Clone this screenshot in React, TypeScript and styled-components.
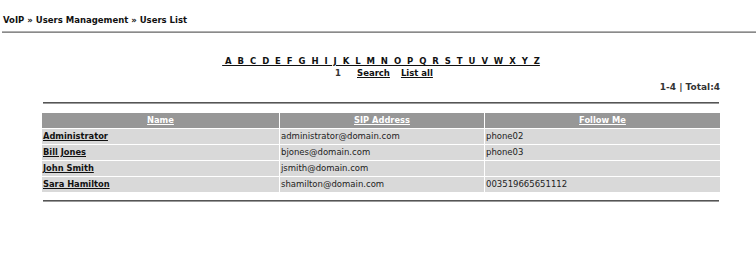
import React from "react";
import styled, { createGlobalStyle } from "styled-components";

const Global = createGlobalStyle`
  html, body { margin: 0; padding: 0; background: #fff; }
  body { font-family: "DejaVu Sans", Verdana, sans-serif; color: #222; }
`;

const Page = styled.div`
  width: 756px;
  height: 258px;
  overflow: hidden;
`;

const Breadcrumb = styled.div`
  padding: 15px 0 0 3px;
  height: 16px;
  font-size: 8.5px;
  font-weight: bold;
  line-height: 11px;
  color: #111;
`;

const TopRule = styled.div`
  margin-left: 2px;
  border-bottom: 1px solid #8a8a8a;
  border-top: 1px solid #b0b0b0;
`;

const Content = styled.div`
  margin-left: 41px;
  width: 680px;
`;

const Letters = styled.div`
  margin-top: 23px;
  text-align: center;
  font-size: 8.5px;
  font-weight: bold;
  line-height: 11px;
`;

const LetterLink = styled.a`
  color: #111;
  text-decoration: underline;
  white-space: pre;
`;

const Actions = styled.div`
  display: flex;
  justify-content: center;
  margin-top: 1px;
  padding-left: 6px;
  font-size: 8.5px;
  font-weight: bold;
  line-height: 11px;
`;

const Plain = styled.span`
  color: #333;
  margin-right: 16px;
`;

const ActionLink = styled.a<{ $gap?: number }>`
  color: #111;
  text-decoration: underline;
  margin-right: ${(p) => p.$gap ?? 0}px;
`;

const Counter = styled.div`
  margin-top: 3px;
  padding-right: 1px;
  text-align: right;
  font-size: 9px;
  font-weight: bold;
  line-height: 11px;
  color: #333;
`;

const Hr = styled.div<{ $top: number }>`
  margin: ${(p) => p.$top}px 2px 0;
  border-top: 1px solid #555;
  border-bottom: 1px solid #9a9a9a;
`;

const Table = styled.table`
  margin-top: 8px;
  width: 680px;
  border-collapse: separate;
  border-spacing: 1px;
  font-size: 8.5px;
  table-layout: fixed;
`;

const HeadCell = styled.th`
  background: #979797;
  height: 15px;
  padding: 0;
  font-weight: bold;
  font-size: 8.3px;
  text-align: center;
  line-height: 15px;
`;

const HeadLink = styled.a`
  color: #fff;
  text-decoration: underline;
`;

const Cell = styled.td`
  background: #d9d9d9;
  height: 15px;
  padding: 0 0 0 1px;
  line-height: 15px;
  color: #222;
  white-space: nowrap;
`;

const NameLink = styled.a`
  color: #111;
  font-weight: bold;
  font-size: 8.3px;
  text-decoration: underline;
`;

const users = [
  { name: "Administrator", sip: "administrator@domain.com", follow: "phone02" },
  { name: "Bill Jones", sip: "bjones@domain.com", follow: "phone03" },
  { name: "John Smith", sip: "jsmith@domain.com", follow: "" },
  { name: "Sara Hamilton", sip: "shamilton@domain.com", follow: "003519665651112" },
];

const letters = "ABCDEFGHIJKLMNOPQRSTUVWXYZ".split("");

export default function App() {
  return (
    <Page>
      <Global />
      <Breadcrumb>VoIP » Users Management » Users List</Breadcrumb>
      <TopRule />
      <Content>
        <Letters>
          <LetterLink href="#">{" " + letters.join("  ")}</LetterLink>
        </Letters>
        <Actions>
          <Plain>1</Plain>
          <ActionLink href="#" $gap={11}>Search</ActionLink>
          <ActionLink href="#">List all</ActionLink>
        </Actions>
        <Counter>1-4 | Total:4</Counter>
        <Hr $top={9} />
        <Table>
          <colgroup>
            <col style={{ width: "237px" }} />
            <col style={{ width: "204px" }} />
            <col />
          </colgroup>
          <thead>
            <tr>
              <HeadCell><HeadLink href="#">Name</HeadLink></HeadCell>
              <HeadCell><HeadLink href="#">SIP Address</HeadLink></HeadCell>
              <HeadCell><HeadLink href="#">Follow Me</HeadLink></HeadCell>
            </tr>
          </thead>
          <tbody>
            {users.map((u) => (
              <tr key={u.name}>
                <Cell><NameLink href="#">{u.name}</NameLink></Cell>
                <Cell>{u.sip}</Cell>
                <Cell>{u.follow}</Cell>
              </tr>
            ))}
          </tbody>
        </Table>
        <Hr $top={7} />
      </Content>
    </Page>
  );
}
